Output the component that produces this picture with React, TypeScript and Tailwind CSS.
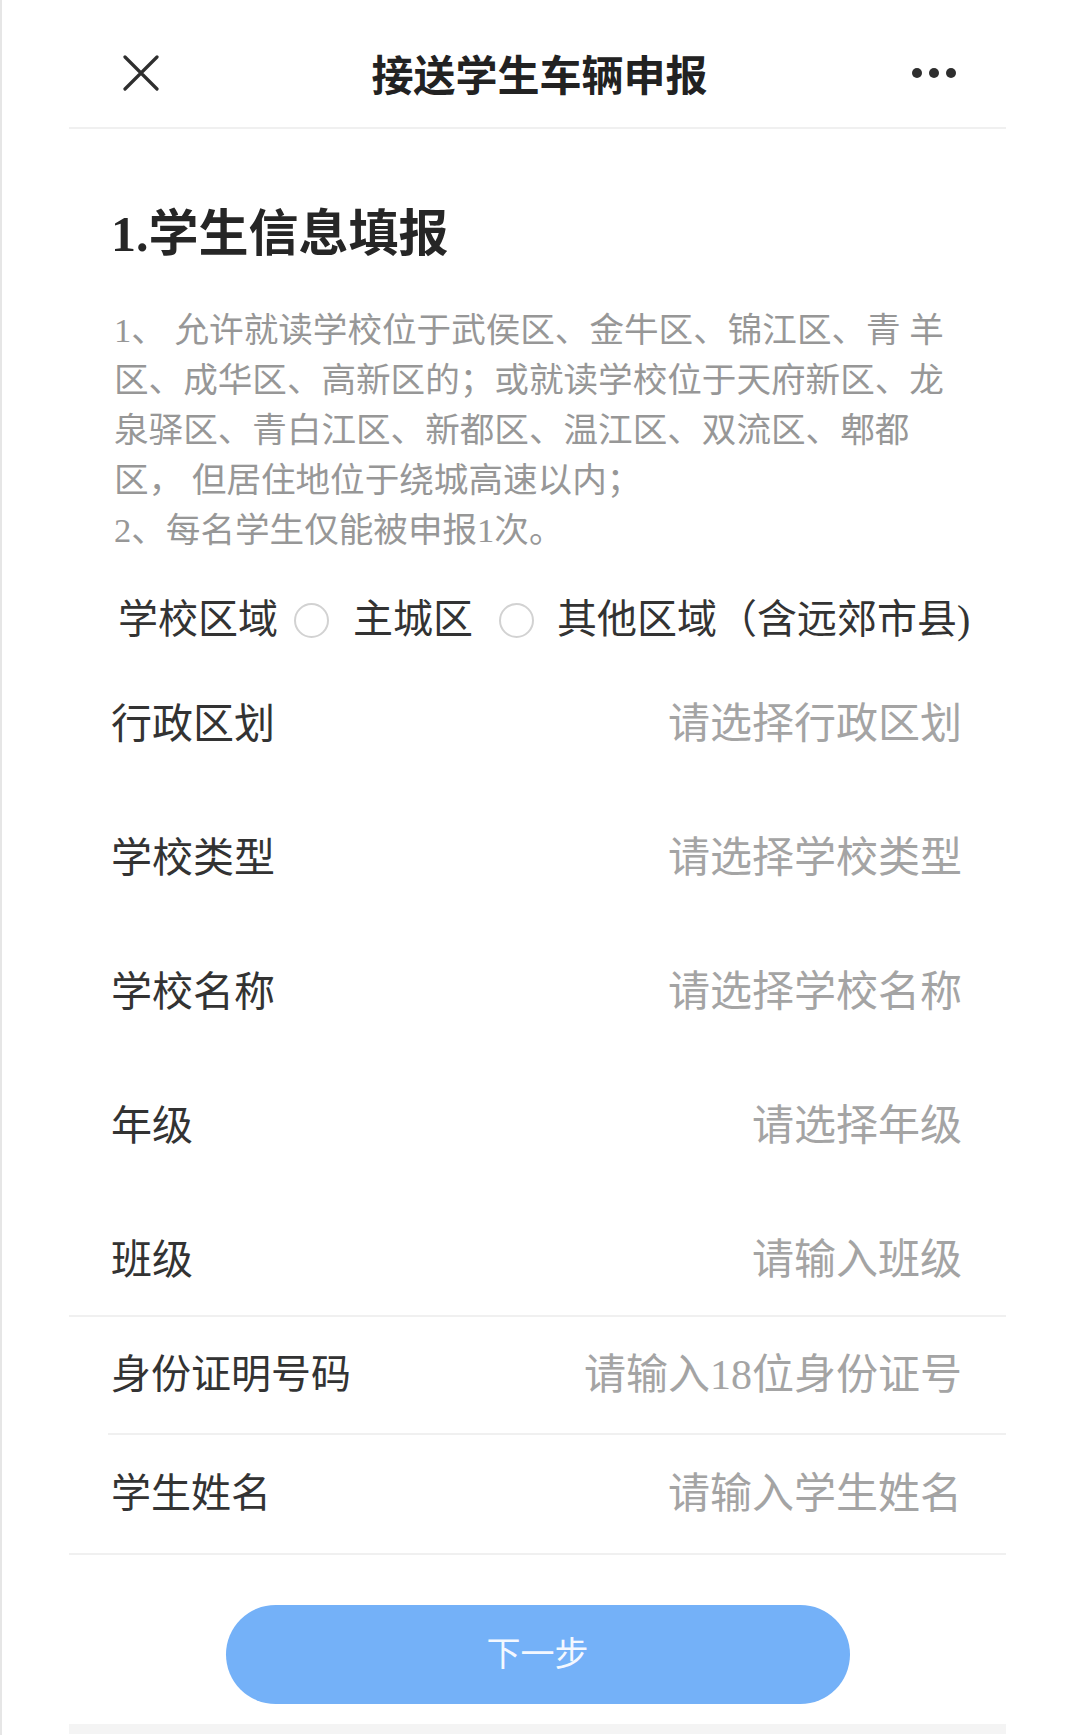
import React from 'react';

const pickers = [
  { label: '行政区划', hint: '请选择行政区划' },
  { label: '学校类型', hint: '请选择学校类型' },
  { label: '学校名称', hint: '请选择学校名称' },
  { label: '年级', hint: '请选择年级' },
  { label: '班级', hint: '请输入班级' },
];

const notes = [
  '1、 允许就读学校位于武侯区、金牛区、锦江区、青 羊',
  '区、成华区、高新区的；或就读学校位于天府新区、龙',
  '泉驿区、青白江区、新都区、温江区、双流区、郫都',
  '区， 但居住地位于绕城高速以内；',
  '2、每名学生仅能被申报1次。',
];

const CloseIcon = () => (
  <svg width="36" height="36" viewBox="0 0 36 36" fill="none">
    <path d="M2 2L34 34M34 2L2 34" stroke="#2e2e2e" strokeWidth="3.2" strokeLinecap="round" />
  </svg>
);

const Radio = () => (
  <span className="inline-block h-[35px] w-[35px] shrink-0 rounded-full border-[2.5px] border-[#d2d2d2]" />
);

const FieldRow = ({ label, hint, last }: { label: string; hint: string; last?: boolean }) => (
  <div
    className={
      last
        ? 'flex h-[122px] items-center justify-between pl-[42px] pr-[44px] pt-[12px]'
        : 'flex h-[134px] items-center justify-between pl-[42px] pr-[44px]'
    }
  >
    <span className="text-[41px] leading-[50px] text-[#333333]">{label}</span>
    <span className="text-[42px] leading-[50px] text-[#a4a4a4]">{hint}</span>
  </div>
);

export default function App() {
  return (
    <div className="min-h-[1735px] w-[1080px] border-l-2 border-[#e6e6e6] bg-white font-['Liberation_Serif','Noto_Sans_CJK_SC',serif]">
      <div className="ml-[67px] w-[937px]">
        {/* header */}
        <div className="grid h-[129px] grid-cols-[1fr_auto_1fr] items-center border-b-2 border-[#f0f0f0] pt-[18px]">
          <div className="pl-[54px]">
            <CloseIcon />
          </div>
          <div className="pl-[4px] font-['Noto_Sans_CJK_SC',sans-serif] text-[42px] font-semibold leading-[50px] text-[#222222]">
            接送学生车辆申报
          </div>
          <div className="flex justify-end gap-[7px] pr-[50px]">
            <span className="h-[10px] w-[10px] rounded-full bg-[#2e2e2e]" />
            <span className="h-[10px] w-[10px] rounded-full bg-[#2e2e2e]" />
            <span className="h-[10px] w-[10px] rounded-full bg-[#2e2e2e]" />
          </div>
        </div>

        <h1 className="mt-[75px] pl-[42px] text-[50px] font-bold leading-[60px] text-[#262626]">1.学生信息填报</h1>

        <div className="mt-[41px] pl-[45px] text-[34.6px] leading-[50px] whitespace-pre text-[#979797]">
          {notes.map((line) => (
            <div key={line}>{line}</div>
          ))}
        </div>

        <div className="mt-[35px] flex h-[60px] items-center pl-[49px] text-[40px] text-[#333333]">
          <span>学校区域</span>
          <span className="ml-[16px] flex">
            <Radio />
          </span>
          <span className="ml-[24px]">主城区</span>
          <span className="ml-[26px] flex">
            <Radio />
          </span>
          <span className="ml-[23px]">其他区域（含远郊市县)</span>
        </div>

        <div className="mt-[7px]">
          {pickers.map((p, i) => (
            <FieldRow key={p.label} label={p.label} hint={p.hint} last={i === pickers.length - 1} />
          ))}
        </div>

        <div className="h-[2px] bg-[#f0f0f0]" />
        <div className="flex h-[116px] items-center justify-between pl-[42px] pr-[44px]">
          <span className="text-[40px] leading-[50px] text-[#333333]">身份证明号码</span>
          <span className="text-[42px] leading-[50px] text-[#a4a4a4]">请输入18位身份证号</span>
        </div>
        <div className="ml-[39px] h-[2px] bg-[#f0f0f0]" />
        <div className="flex h-[118px] items-center justify-between pl-[42px] pr-[44px]">
          <span className="text-[40px] leading-[50px] text-[#333333]">学生姓名</span>
          <span className="text-[42px] leading-[50px] text-[#a4a4a4]">请输入学生姓名</span>
        </div>
        <div className="h-[2px] bg-[#f0f0f0]" />

        <button className="mx-auto mt-[50px] flex h-[99px] w-[624px] items-center justify-center rounded-full bg-[#74b1f8] text-[34px] text-[#f4f8ff]">
          下一步
        </button>

        <div className="mt-[20px] h-[10px] bg-[#f4f4f4]" />
      </div>
    </div>
  );
}
